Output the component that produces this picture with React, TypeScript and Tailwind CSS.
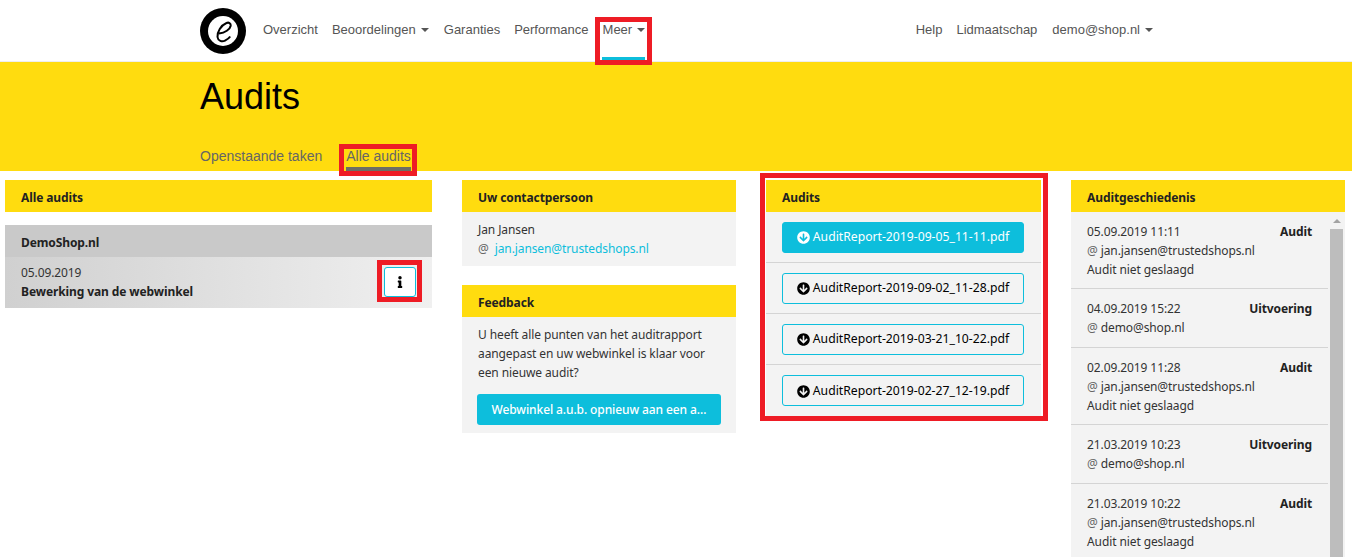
import { FaArrowCircleDown, FaInfo } from 'react-icons/fa'
import type { ReactNode } from 'react'

const nav = "font-['Liberation_Sans',Arial,sans-serif]"

function Caret() {
  return <span className="ml-[5px] inline-block align-middle border-x-[4px] border-t-[4px] border-x-transparent border-t-[#555]" />
}

function Heading({ children }: { children: ReactNode }) {
  return <h2 className="flex h-8 items-center bg-[#ffdc0f] px-4 pt-[3px] font-bold text-[#222]">{children}</h2>
}

function Panel({ title, children }: { title: string; children: ReactNode }) {
  return (
    <section className="bg-[#f3f3f3]">
      <Heading>{title}</Heading>
      {children}
    </section>
  )
}

function ReportButton({ name, primary }: { name: string; primary?: boolean }) {
  return (
    <div className="flex h-[51px] items-center border-b border-[#d4d4d4] pl-4 pr-[17px] last:border-b-0">
      <button
        className={
          primary
            ? 'flex h-[31px] w-full items-center justify-center gap-[3px] rounded-[3px] border border-[#0dbedc] bg-[#0dbedc] pt-px text-[12.2px] tracking-normal text-white'
            : 'flex h-[31px] w-full items-center justify-center gap-[3px] rounded-[3px] border border-[#0dbedc] pt-px text-[12.2px] tracking-normal text-black'
        }
      >
        <FaArrowCircleDown size={13} />
        {name}
      </button>
    </div>
  )
}

function HistoryItem({ date, type, mail, note }: { date: string; type: string; mail: string; note?: boolean }) {
  return (
    <div className={note ? 'border-b border-[#d4d4d4] pb-[9px] pl-4 pr-4 pt-[10px] leading-[19px]' : 'border-b border-[#d4d4d4] pb-[10px] pl-4 pr-4 pt-[10px] leading-[19px]'}>
      <div className="flex justify-between">
        <span>{date}</span>
        <b className="text-[#222]">{type}</b>
      </div>
      <div><span className="text-[#666]">@</span> {mail}</div>
      {note && <div>Audit niet geslaagd</div>}
    </div>
  )
}

// red annotation boxes lying over the screenshot
function Mark({ className }: { className: string }) {
  return <div className={'pointer-events-none absolute border-[5px] border-[#ee1c25] ' + className} />
}

export default function App() {
  return (
    <div className="relative h-[557px] overflow-hidden bg-white font-['Noto_Sans',sans-serif] text-[12px] tracking-[-0.1px] text-[#333]">
      {/* Top nav */}
      <header className={`flex h-[62px] items-center border-b border-[#eee] pl-[200px] pr-[199px] text-[13px] tracking-normal text-[#555] ${nav}`}>
        <svg viewBox="0 0 46 46" className="mr-[17px] h-[46px] w-[46px]">
          <circle cx="23" cy="23" r="23" fill="#000" />
          <circle cx="23" cy="23" r="15" fill="#fff" />
          <path d="M19 25.500C25 24.800 30 21.500 30.700 17.700 31 15.200 28.700 14 26.500 15 21 17.300 17 24 17.500 29 18 33 22 34.200 25 32.700 27 31.700 29 30.200 30.200 28.500" fill="none" stroke="#000" strokeWidth="2" />
        </svg>
        <nav className="flex gap-[14px] pb-[2px]">
          <a>Overzicht</a>
          <a className="mr-px">Beoordelingen<Caret /></a>
          <a>Garanties</a>
          <a>Performance</a>
          <a>Meer<Caret /></a>
        </nav>
        <nav className="ml-auto flex gap-[14px] pb-[2px]">
          <a>Help</a>
          <a className="mr-px">Lidmaatschap</a>
          <a>demo@shop.nl<Caret /></a>
        </nav>
      </header>
      <div className="absolute left-[602px] top-[57px] h-[3px] w-[43px] bg-[#0dbedc]" />

      {/* Title band */}
      <div className={`flex h-[109px] flex-col bg-[#ffdc0f] pl-[200px] tracking-normal ${nav}`}>
        <h1 className="mt-[12px] text-[36px] leading-[46px] text-black">Audits</h1>
        <div className="mt-auto flex gap-[24px] text-[14px] text-[#666]">
          <a className="h-[25px]">Openstaande taken</a>
          <a className="h-[25px] border-b-[4px] border-[#6e6e64]">Alle audits</a>
        </div>
      </div>

      {/* Columns */}
      <main className="grid grid-cols-[427px_274px_275px_274px] items-start gap-[30px] pl-[5px] pt-[9px]">
        <div>
          <Heading>Alle audits</Heading>
          <div className="mt-[13px] flex h-8 items-center bg-[#c9c9c9] px-4 pt-[3px] font-bold text-[#222]">DemoShop.nl</div>
          <div className="flex h-[51px] items-center justify-between bg-gradient-to-r from-[#d0d0d0] to-[#f0f0f0] pb-[2px] pl-4 pr-[16px] leading-[19px]">
            <div>
              <div>05.09.2019</div>
              <b className="text-[#222]">Bewerking van de webwinkel</b>
            </div>
            <button className="flex h-[30px] w-[32px] items-center justify-center rounded-[3px] border border-[#0dbedc] bg-white text-black">
              <FaInfo size={12} />
            </button>
          </div>
        </div>

        <div className="flex flex-col gap-[19px]">
          <Panel title="Uw contactpersoon">
            <div className="px-4 pb-2 pt-2 leading-[19px]">
              <div>Jan Jansen</div>
              <div><span className="mr-[6px] text-[#666]">@</span><a className="text-[#0dbedc]">jan.jansen@trustedshops.nl</a></div>
            </div>
          </Panel>
          <Panel title="Feedback">
            <div className="px-4 pb-2 pt-2 leading-[19px]">
              U heeft alle punten van het auditrapport aangepast en uw webwinkel is klaar voor een nieuwe audit?
              <button className="-ml-px mt-[12px] block h-[31px] w-[244px] rounded-[3px] bg-[#0dbedc] font-medium text-white">Webwinkel a.u.b. opnieuw aan een a…</button>
            </div>
          </Panel>
        </div>

        <Panel title="Audits">
          <ReportButton primary name="AuditReport-2019-09-05_11-11.pdf" />
          <ReportButton name="AuditReport-2019-09-02_11-28.pdf" />
          <ReportButton name="AuditReport-2019-03-21_10-22.pdf" />
          <ReportButton name="AuditReport-2019-02-27_12-19.pdf" />
        </Panel>

        <Panel title="Auditgeschiedenis">
          <div className="flex">
            <div className="min-w-0 flex-1">
              <HistoryItem date="05.09.2019 11:11" type="Audit" mail="jan.jansen@trustedshops.nl" note />
              <HistoryItem date="04.09.2019 15:22" type="Uitvoering" mail="demo@shop.nl" />
              <HistoryItem date="02.09.2019 11:28" type="Audit" mail="jan.jansen@trustedshops.nl" note />
              <HistoryItem date="21.03.2019 10:23" type="Uitvoering" mail="demo@shop.nl" />
              <HistoryItem date="21.03.2019 10:22" type="Audit" mail="jan.jansen@trustedshops.nl" note />
            </div>
            {/* scrollbar */}
            <div className="w-[17px] shrink-0 px-[2px]">
              <div className="mx-auto mt-[7px] h-0 w-0 border-x-[4px] border-b-[4px] border-x-transparent border-b-[#a3a3a3]" />
              <div className="mt-[6px] h-[400px] bg-[#bdbdbd]" />
            </div>
          </div>
        </Panel>
      </main>

      <Mark className="left-[595px] top-[17px] h-[48px] w-[57px]" />
      <Mark className="left-[339px] top-[144px] h-[32px] w-[78px]" />
      <Mark className="left-[377px] top-[260px] h-[42px] w-[45px]" />
      <Mark className="left-[760px] top-[173px] h-[248px] w-[288px]" />
    </div>
  )
}
